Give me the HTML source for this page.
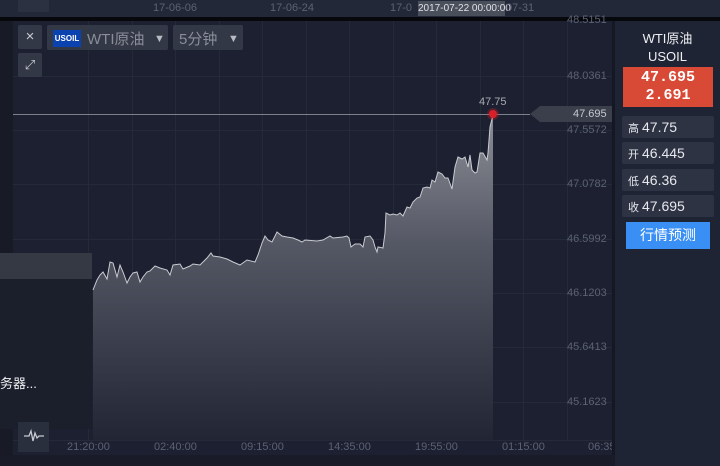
<!DOCTYPE html>
<html><head><meta charset="utf-8"><style>
*{margin:0;padding:0;box-sizing:border-box}
body{width:720px;height:466px;overflow:hidden;background:#1c2030;font-family:"Liberation Sans","Noto Sans CJK SC",sans-serif;position:relative}
.a{position:absolute;white-space:nowrap}
.pl{position:absolute;left:567px;font-size:11px;color:#5c6273}
.tl{position:absolute;top:441px;font-size:11px;color:#5c6273}
.st{position:absolute;left:622px;width:92px;height:22px;background:#2d3343;border-radius:2px;color:#e6e8ee;font-size:14px;line-height:22px;padding-left:6px}
.st span{font-size:11px;margin-right:3px}
</style></head><body>
<div class="a" style="left:0;top:0;width:720px;height:17px;background:#232839"></div>
<div class="a" style="left:18px;top:0;width:31px;height:12px;background:#2c3142"></div>
<div class="a" style="left:153px;top:2px;font-size:11px;color:#5c6273">17-06-06</div>
<div class="a" style="left:270px;top:2px;font-size:11px;color:#5c6273">17-06-24</div>
<div class="a" style="left:390px;top:2px;font-size:11px;color:#5c6273">17-0</div>
<div class="a" style="left:418px;top:1px;width:87px;height:15px;background:#4a4f5c;color:#dfe1e6;font-size:10px;line-height:15px;text-align:center">2017-07-22 00:00:00</div>
<div class="a" style="left:506px;top:2px;font-size:11px;color:#5c6273">07-31</div>
<div class="a" style="left:0;top:17px;width:720px;height:4px;background:#07080c"></div>
<div class="a" style="left:0;top:21px;width:13px;height:445px;background:#181b26"></div>
<div class="a" style="left:0;top:455px;width:720px;height:11px;background:#191c28"></div>
<svg class="a" style="left:0;top:0" width="720" height="466">
<defs><linearGradient id="g" x1="0" y1="0" x2="0" y2="1"><stop offset="0" stop-color="#8c8e96"/><stop offset="0.4" stop-color="#545764"/><stop offset="1" stop-color="#222634"/></linearGradient></defs>
<g stroke="#252a39" stroke-width="1">
<line x1="13" y1="76.5" x2="612" y2="76.5"/><line x1="13" y1="130.5" x2="612" y2="130.5"/><line x1="13" y1="184.5" x2="612" y2="184.5"/><line x1="13" y1="239.5" x2="612" y2="239.5"/><line x1="13" y1="293.5" x2="612" y2="293.5"/><line x1="13" y1="347.5" x2="612" y2="347.5"/><line x1="13" y1="402.5" x2="612" y2="402.5"/>
<line x1="88.5" y1="21" x2="88.5" y2="440"/><line x1="132.5" y1="21" x2="132.5" y2="440"/><line x1="175.5" y1="21" x2="175.5" y2="440"/><line x1="219.5" y1="21" x2="219.5" y2="440"/><line x1="262.5" y1="21" x2="262.5" y2="440"/><line x1="306.5" y1="21" x2="306.5" y2="440"/><line x1="349.5" y1="21" x2="349.5" y2="440"/><line x1="393.5" y1="21" x2="393.5" y2="440"/><line x1="436.5" y1="21" x2="436.5" y2="440"/><line x1="480.5" y1="21" x2="480.5" y2="440"/><line x1="523.5" y1="21" x2="523.5" y2="440"/><line x1="567.5" y1="21" x2="567.5" y2="440"/>
<line x1="13" y1="440.5" x2="612" y2="440.5"/>
</g>
<polygon fill="url(#g)" points="93,440 93,290 97,280 100,275 103,272 107,279 110,262 113,263 117,277 120,265 123,272 127,283 130,277 133,273 137,272 140,282 143,277 147,272 150,271 155,266 160,268 167,270 170,275 173,265 180,264 183,269 190,266 193,264 200,265 207,258 211,253 213,256 220,257 227,259 233,262 240,265 247,260 255,262 258,255 262,243 265,236 268,240 272,242 277,232 282,236 287,237 293,238 298,240 302,242 305,240 317,241 323,240 330,236 333,238 343,237 347,236 349,238 351,247 355,244 360,244 363,247 365,237 370,236 373,240 375,247 377,252 378,247 383,248 385,233 386,213 390,215 393,214 397,215 400,213 403,216 407,207 410,208 413,202 417,198 420,197 423,188 427,187 430,188 432,180 435,182 438,172 442,174 445,178 448,178 452,189 455,167 458,157 462,159 465,157 468,167 470,155 472,170 475,173 477,172 480,153 483,153 487,160 488,153 490,127 493,115 493,440"/>
<polyline fill="none" stroke="#c9cbd1" stroke-width="1" points="93,290 97,280 100,275 103,272 107,279 110,262 113,263 117,277 120,265 123,272 127,283 130,277 133,273 137,272 140,282 143,277 147,272 150,271 155,266 160,268 167,270 170,275 173,265 180,264 183,269 190,266 193,264 200,265 207,258 211,253 213,256 220,257 227,259 233,262 240,265 247,260 255,262 258,255 262,243 265,236 268,240 272,242 277,232 282,236 287,237 293,238 298,240 302,242 305,240 317,241 323,240 330,236 333,238 343,237 347,236 349,238 351,247 355,244 360,244 363,247 365,237 370,236 373,240 375,247 377,252 378,247 383,248 385,233 386,213 390,215 393,214 397,215 400,213 403,216 407,207 410,208 413,202 417,198 420,197 423,188 427,187 430,188 432,180 435,182 438,172 442,174 445,178 448,178 452,189 455,167 458,157 462,159 465,157 468,167 470,155 472,170 475,173 477,172 480,153 483,153 487,160 488,153 490,127 493,115"/>
<line x1="13" y1="114.5" x2="530" y2="114.5" stroke="#7d818c" stroke-width="1"/>
<circle cx="493" cy="114" r="6" fill="#d9202a" opacity="0.3"/><circle cx="493" cy="114" r="4" fill="#d9202a"/>
<polygon points="530,114 540,106 612,106 612,122 540,122" fill="#3a3f4b"/>
</svg>
<div class="a" style="left:479px;top:96px;font-size:11px;color:#a8abb4">47.75</div>
<div class="a" style="left:573px;top:108px;font-size:11px;color:#c5c8cf">47.695</div>
<div class="pl" style="top:14px">48.5151</div>
<div class="pl" style="top:70px">48.0361</div>
<div class="pl" style="top:124px">47.5572</div>
<div class="pl" style="top:178px">47.0782</div>
<div class="pl" style="top:233px">46.5992</div>
<div class="pl" style="top:287px">46.1203</div>
<div class="pl" style="top:341px">45.6413</div>
<div class="pl" style="top:396px">45.1623</div>
<div class="tl" style="left:67px">21:20:00</div>
<div class="tl" style="left:154px">02:40:00</div>
<div class="tl" style="left:241px">09:15:00</div>
<div class="tl" style="left:328px">14:35:00</div>
<div class="tl" style="left:415px">19:55:00</div>
<div class="tl" style="left:502px">01:15:00</div>
<div class="tl" style="left:588px">06:35</div>
<div class="a" style="left:612px;top:21px;width:3px;height:434px;background:#151823"></div>
<div class="a" style="left:615px;top:21px;width:105px;height:445px;background:#1f2434"></div>
<div class="a" style="left:615px;top:30px;width:105px;text-align:center;color:#eef0f4;font-size:13px;line-height:18px">WTI原油<br>USOIL</div>
<div class="a" style="left:623px;top:67px;width:90px;height:40px;background:#d84a36;color:#fff;font-family:'Liberation Mono',monospace;font-weight:bold;font-size:15px;line-height:18px;text-align:center;padding-top:2px">47.695<br>2.691</div>
<div class="st" style="top:116px"><span>高</span>47.75</div>
<div class="st" style="top:142px"><span>开</span>46.445</div>
<div class="st" style="top:169px"><span>低</span>46.36</div>
<div class="st" style="top:195px"><span>收</span>47.695</div>
<div class="a" style="left:626px;top:222px;width:84px;height:27px;background:#3a8ff5;color:#fff;font-size:14px;line-height:27px;text-align:center">行情预测</div>
<div class="a" style="left:18px;top:25px;width:24px;height:24px;background:#333846;border-radius:2px;color:#c8cbd3;font-size:15px;line-height:24px;text-align:center">×</div>
<div class="a" style="left:18px;top:53px;width:24px;height:24px;background:#333846;border-radius:2px;color:#c8cbd3;font-size:13px;line-height:24px;text-align:center">⤢</div>
<div class="a" style="left:47px;top:25px;width:121px;height:25px;background:#333846;border-radius:2px"></div>
<div class="a" style="left:53px;top:30px;width:28px;height:17px;background:#0a43b0;color:#fff;font-size:8px;font-weight:bold;line-height:17px;text-align:center">USOIL</div>
<div class="a" style="left:87px;top:28px;color:#8a8e99;font-size:15px">WTI原油</div>
<div class="a" style="left:154px;top:33px;color:#b8bbc3;font-size:11px">▼</div>
<div class="a" style="left:173px;top:25px;width:70px;height:25px;background:#333846;border-radius:2px"></div>
<div class="a" style="left:179px;top:28px;color:#8a8e99;font-size:15px">5分钟</div>
<div class="a" style="left:228px;top:33px;color:#b8bbc3;font-size:11px">▼</div>
<div class="a" style="left:0;top:253px;width:92px;height:176px;background:#1b1f2c"></div>
<div class="a" style="left:0;top:253px;width:92px;height:26px;background:#353944"></div>
<div class="a" style="left:0;top:373px;color:#f0f1f4;font-size:13px">务器...</div>
<div class="a" style="left:18px;top:422px;width:31px;height:30px;background:#2a2f3e"></div>
<svg class="a" style="left:24px;top:428px" width="20" height="16"><polyline points="0,8 5,8 7,3 9,13 11,5 13,10 15,8 20,8" fill="none" stroke="#c8cbd3" stroke-width="1.3"/></svg>
</body></html>
